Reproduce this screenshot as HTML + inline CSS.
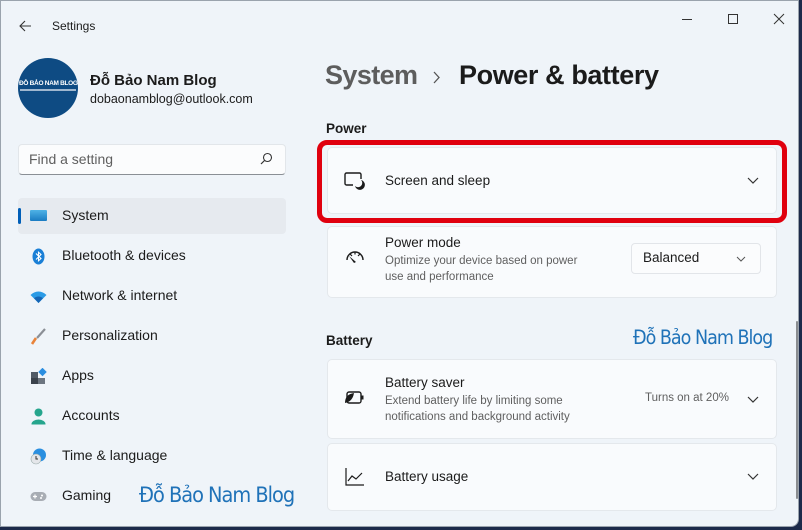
<!DOCTYPE html>
<html><head><meta charset="utf-8"><style>
*{margin:0;padding:0;box-sizing:border-box}
body{width:802px;height:530px;overflow:hidden;background:#1c2a4a;font-family:"Segoe UI","Liberation Sans",sans-serif;color:#1b1b1b;position:relative}
.win{position:absolute;left:0;top:0;width:799px;height:527px;background:#eff4f9;border:1px solid #9aa3ad;border-radius:0 0 8px 0;overflow:hidden}
.abs{position:absolute}
.t{position:absolute;white-space:nowrap}
.nav{position:absolute;left:17px;width:268px;height:36px}
.nav .lbl{position:absolute;left:44px;top:9px;font-size:14px}
.nav .ic{position:absolute;left:12px;top:10px;width:17px;height:17px}
.card{position:absolute;left:326px;width:450px;background:#f9fbfd;border:1px solid #e4e8ec;border-radius:5px}
.wm{position:absolute;color:#1f72b8;white-space:nowrap;font-family:"DejaVu Sans Condensed","Liberation Sans Narrow","Liberation Sans",sans-serif;letter-spacing:-1px}
</style></head><body>
<div class="win">
<svg class="abs" style="left:17px;top:18px" width="14" height="14" viewBox="0 0 14 14"><path d="M13 7H2M7 2L2 7l5 5" stroke="#333" stroke-width="1.1" fill="none"/></svg>
<div class="t" style="left:51px;top:18px;font-size:12px">Settings</div>
<svg class="abs" style="left:680px;top:12px" width="110" height="14"><path d="M1 6.5h10" stroke="#333"/><rect x="47.5" y="1.5" width="9" height="9" stroke="#333" fill="none"/><path d="M93 1l10 10M103 1L93 11" stroke="#333"/></svg>
<div class="abs" style="left:17px;top:57px;width:60px;height:60px;border-radius:50%;background:#0e4b83"></div>
<div class="t" style="left:18px;top:79px;font-size:6.5px;color:#fff;font-weight:bold;letter-spacing:-0.3px">ĐỖ BẢO NAM BLOG</div>
<div class="abs" style="left:19px;top:88px;width:56px;height:2px;background:#9fb7cf"></div>
<div class="t" style="left:89px;top:71px;font-size:15px;font-weight:600">Đỗ Bảo Nam Blog</div>
<div class="t" style="left:89px;top:91px;font-size:12.5px">dobaonamblog@outlook.com</div>
<div class="abs" style="left:17px;top:143px;width:268px;height:31px;background:#fbfcfd;border:1px solid #e2e6ea;border-bottom:1px solid #8a8f95;border-radius:4px"></div>
<div class="t" style="left:28px;top:150px;font-size:14px;color:#5f5f5f">Find a setting</div>
<svg class="abs" style="left:259px;top:151px" width="13" height="13"><circle cx="7.5" cy="5.5" r="4" stroke="#333" fill="none" stroke-width="1.1"/><path d="M4.5 8.5L1 12" stroke="#333" stroke-width="1.2"/></svg>
<div class="nav" style="top:197px;background:#e6eaef;border-radius:4px"><div class="abs" style="left:0;top:10px;width:3px;height:16px;background:#005fb8;border-radius:2px"></div>
<div class="abs" style="left:12px;top:12px;width:17px;height:11px;background:linear-gradient(#4fb3e6,#1a7cc2);border-radius:1px"></div><div class="lbl">System</div></div>
<div class="nav" style="top:237px"><svg class="ic" viewBox="0 0 17 17"><ellipse cx="8.5" cy="8.5" rx="6" ry="8" fill="#1a7fd6"/><path d="M6 5.5l5 5-2.5 2.3V4.2L11 6.5l-5 5" stroke="#fff" stroke-width="1.1" fill="none"/></svg><div class="lbl">Bluetooth &amp; devices</div></div>
<div class="nav" style="top:277px"><svg class="ic" viewBox="0 0 17 17"><path d="M0.5 7A11 11 0 0 1 16.5 7L8.5 15z" fill="#2b9be6"/><path d="M4 10.3A6.5 6.5 0 0 1 13 10.3L8.5 15z" fill="#1565b5"/></svg><div class="lbl">Network &amp; internet</div></div>
<div class="nav" style="top:317px"><svg class="ic" viewBox="0 0 17 17"><path d="M15 1L7 10" stroke="#8b8f96" stroke-width="2.2"/><path d="M6 10L2 16" stroke="#e8833a" stroke-width="2.6"/></svg><div class="lbl">Personalization</div></div>
<div class="nav" style="top:357px"><svg class="ic" viewBox="0 0 17 17"><rect x="1" y="4" width="7" height="6" fill="#505a66"/><rect x="1" y="10" width="7" height="6" fill="#3a424c"/><rect x="8" y="10" width="7" height="6" fill="#6c7580"/><rect x="9.5" y="1" width="6" height="6" fill="#2b8ee0" transform="rotate(45 12.5 4)"/></svg><div class="lbl">Apps</div></div>
<div class="nav" style="top:397px"><svg class="ic" viewBox="0 0 17 17"><circle cx="8.5" cy="4.5" r="4" fill="#25a58d"/><path d="M1.5 16a7 4.5 0 0 1 14 0v0.5h-14z" fill="#25a58d"/></svg><div class="lbl">Accounts</div></div>
<div class="nav" style="top:437px"><svg class="ic" viewBox="0 0 17 17"><circle cx="9.5" cy="7" r="6.5" fill="#2a8fe0"/><circle cx="6" cy="11" r="5" fill="#e4e6ea" stroke="#9aa" stroke-width="0.6"/><path d="M6 8v3h2" stroke="#333" fill="none"/></svg><div class="lbl">Time &amp; language</div></div>
<div class="nav" style="top:477px"><svg class="ic" viewBox="0 0 17 17"><rect x="0.5" y="4" width="16" height="9" rx="4.5" fill="#a8adb4"/><path d="M3 8.5h4M5 6.5v4" stroke="#fff" stroke-width="1.2"/><circle cx="12" cy="7.5" r="1" fill="#fff"/><circle cx="11" cy="10" r="1" fill="#fff"/></svg><div class="lbl">Gaming</div></div>
<div class="wm" style="left:138px;top:482px;font-size:21.5px">Đỗ Bảo Nam Blog</div>
<div class="t" style="left:324px;top:59px;font-size:27px;color:#5d5d5d;font-weight:600;letter-spacing:-0.6px">System</div>
<svg class="abs" style="left:431px;top:70px" width="10" height="14"><path d="M2 1l5 5.5L2 12" stroke="#555" stroke-width="1.3" fill="none"/></svg>
<div class="t" style="left:458px;top:59px;font-size:27px;font-weight:600;letter-spacing:-0.4px">Power &amp; battery</div>
<div class="t" style="left:325px;top:120px;font-size:13.5px;font-weight:600">Power</div>
<div class="card" style="top:146px;height:67px"></div>
<div class="abs" style="left:316px;top:139px;width:470px;height:83px;border:5px solid #e0000e;border-radius:10px"></div>
<svg class="abs" style="left:343px;top:171px" width="22" height="18"><path d="M9 13H2.5a1.5 1.5 0 0 1-1.5-1.5v-9A1.5 1.5 0 0 1 2.5 1h13A1.5 1.5 0 0 1 17 2.5V7" stroke="#1b1b1b" stroke-width="1.4" fill="none"/><path d="M17 8a5 5 0 1 1-6 6a4 4 0 0 0 6-6z" fill="#1b1b1b"/></svg>
<div class="t" style="left:384px;top:172px;font-size:13.5px">Screen and sleep</div>
<svg class="abs" style="left:746px;top:176px" width="12" height="8"><path d="M1 1l5 5 5-5" stroke="#333" stroke-width="1.2" fill="none"/></svg>
<div class="card" style="top:225px;height:72px"></div>
<svg class="abs" style="left:344px;top:249px" width="20" height="16"><path d="M2 10a8 8 0 0 1 16 0" stroke="#1b1b1b" stroke-width="1.4" fill="none"/><path d="M5 4l2 2M10 2v2.5M15 4l-2 2" stroke="#1b1b1b" stroke-width="1.2"/><path d="M4 6l7 6-2 1z" fill="#1b1b1b"/></svg>
<div class="t" style="left:384px;top:234px;font-size:13.5px">Power mode</div>
<div class="t" style="left:384px;top:252px;font-size:11.5px;color:#5f5f5f;line-height:16px">Optimize your device based on power<br>use and performance</div>
<div class="abs" style="left:630px;top:242px;width:130px;height:31px;background:#fbfcfd;border:1px solid #e2e5e9;border-radius:4px"></div>
<div class="t" style="left:642px;top:249px;font-size:13.5px">Balanced</div>
<svg class="abs" style="left:735px;top:255px" width="10" height="6"><path d="M1 1l4 4 4-4" stroke="#555" fill="none"/></svg>
<div class="t" style="left:325px;top:332px;font-size:13.5px;font-weight:600">Battery</div>
<div class="wm" style="left:632px;top:325px;font-size:19.5px">Đỗ Bảo Nam Blog</div>
<div class="card" style="top:358px;height:80px"></div>
<svg class="abs" style="left:343px;top:389px" width="22" height="16"><rect x="3" y="2" width="14" height="11" rx="2" stroke="#1b1b1b" stroke-width="1.4" fill="none"/><rect x="17.5" y="5.5" width="2" height="4" fill="#1b1b1b"/><path d="M1 13c0-6 3-9 9-10c-1 6-4 9-9 10z" fill="#1b1b1b"/></svg>
<div class="t" style="left:384px;top:374px;font-size:13.5px">Battery saver</div>
<div class="t" style="left:384px;top:392px;font-size:11.5px;color:#5f5f5f;line-height:16px">Extend battery life by limiting some<br>notifications and background activity</div>
<div class="t" style="left:644px;top:391px;font-size:11.5px;color:#5f5f5f">Turns on at 20%</div>
<svg class="abs" style="left:746px;top:395px" width="12" height="8"><path d="M1 1l5 5 5-5" stroke="#333" stroke-width="1.2" fill="none"/></svg>
<div class="card" style="top:442px;height:68px"></div>
<svg class="abs" style="left:344px;top:466px" width="20" height="20"><path d="M1 1v17h18" stroke="#1b1b1b" stroke-width="1.2" fill="none"/><path d="M3 14l4-5 4 3 6-6" stroke="#1b1b1b" stroke-width="1.2" fill="none"/></svg>
<div class="t" style="left:384px;top:468px;font-size:13.5px">Battery usage</div>
<svg class="abs" style="left:746px;top:472px" width="12" height="8"><path d="M1 1l5 5 5-5" stroke="#333" stroke-width="1.2" fill="none"/></svg>
<div class="abs" style="left:795px;top:320px;width:2px;height:178px;background:#8a8d91;border-radius:1px"></div>
</div>
</body></html>
